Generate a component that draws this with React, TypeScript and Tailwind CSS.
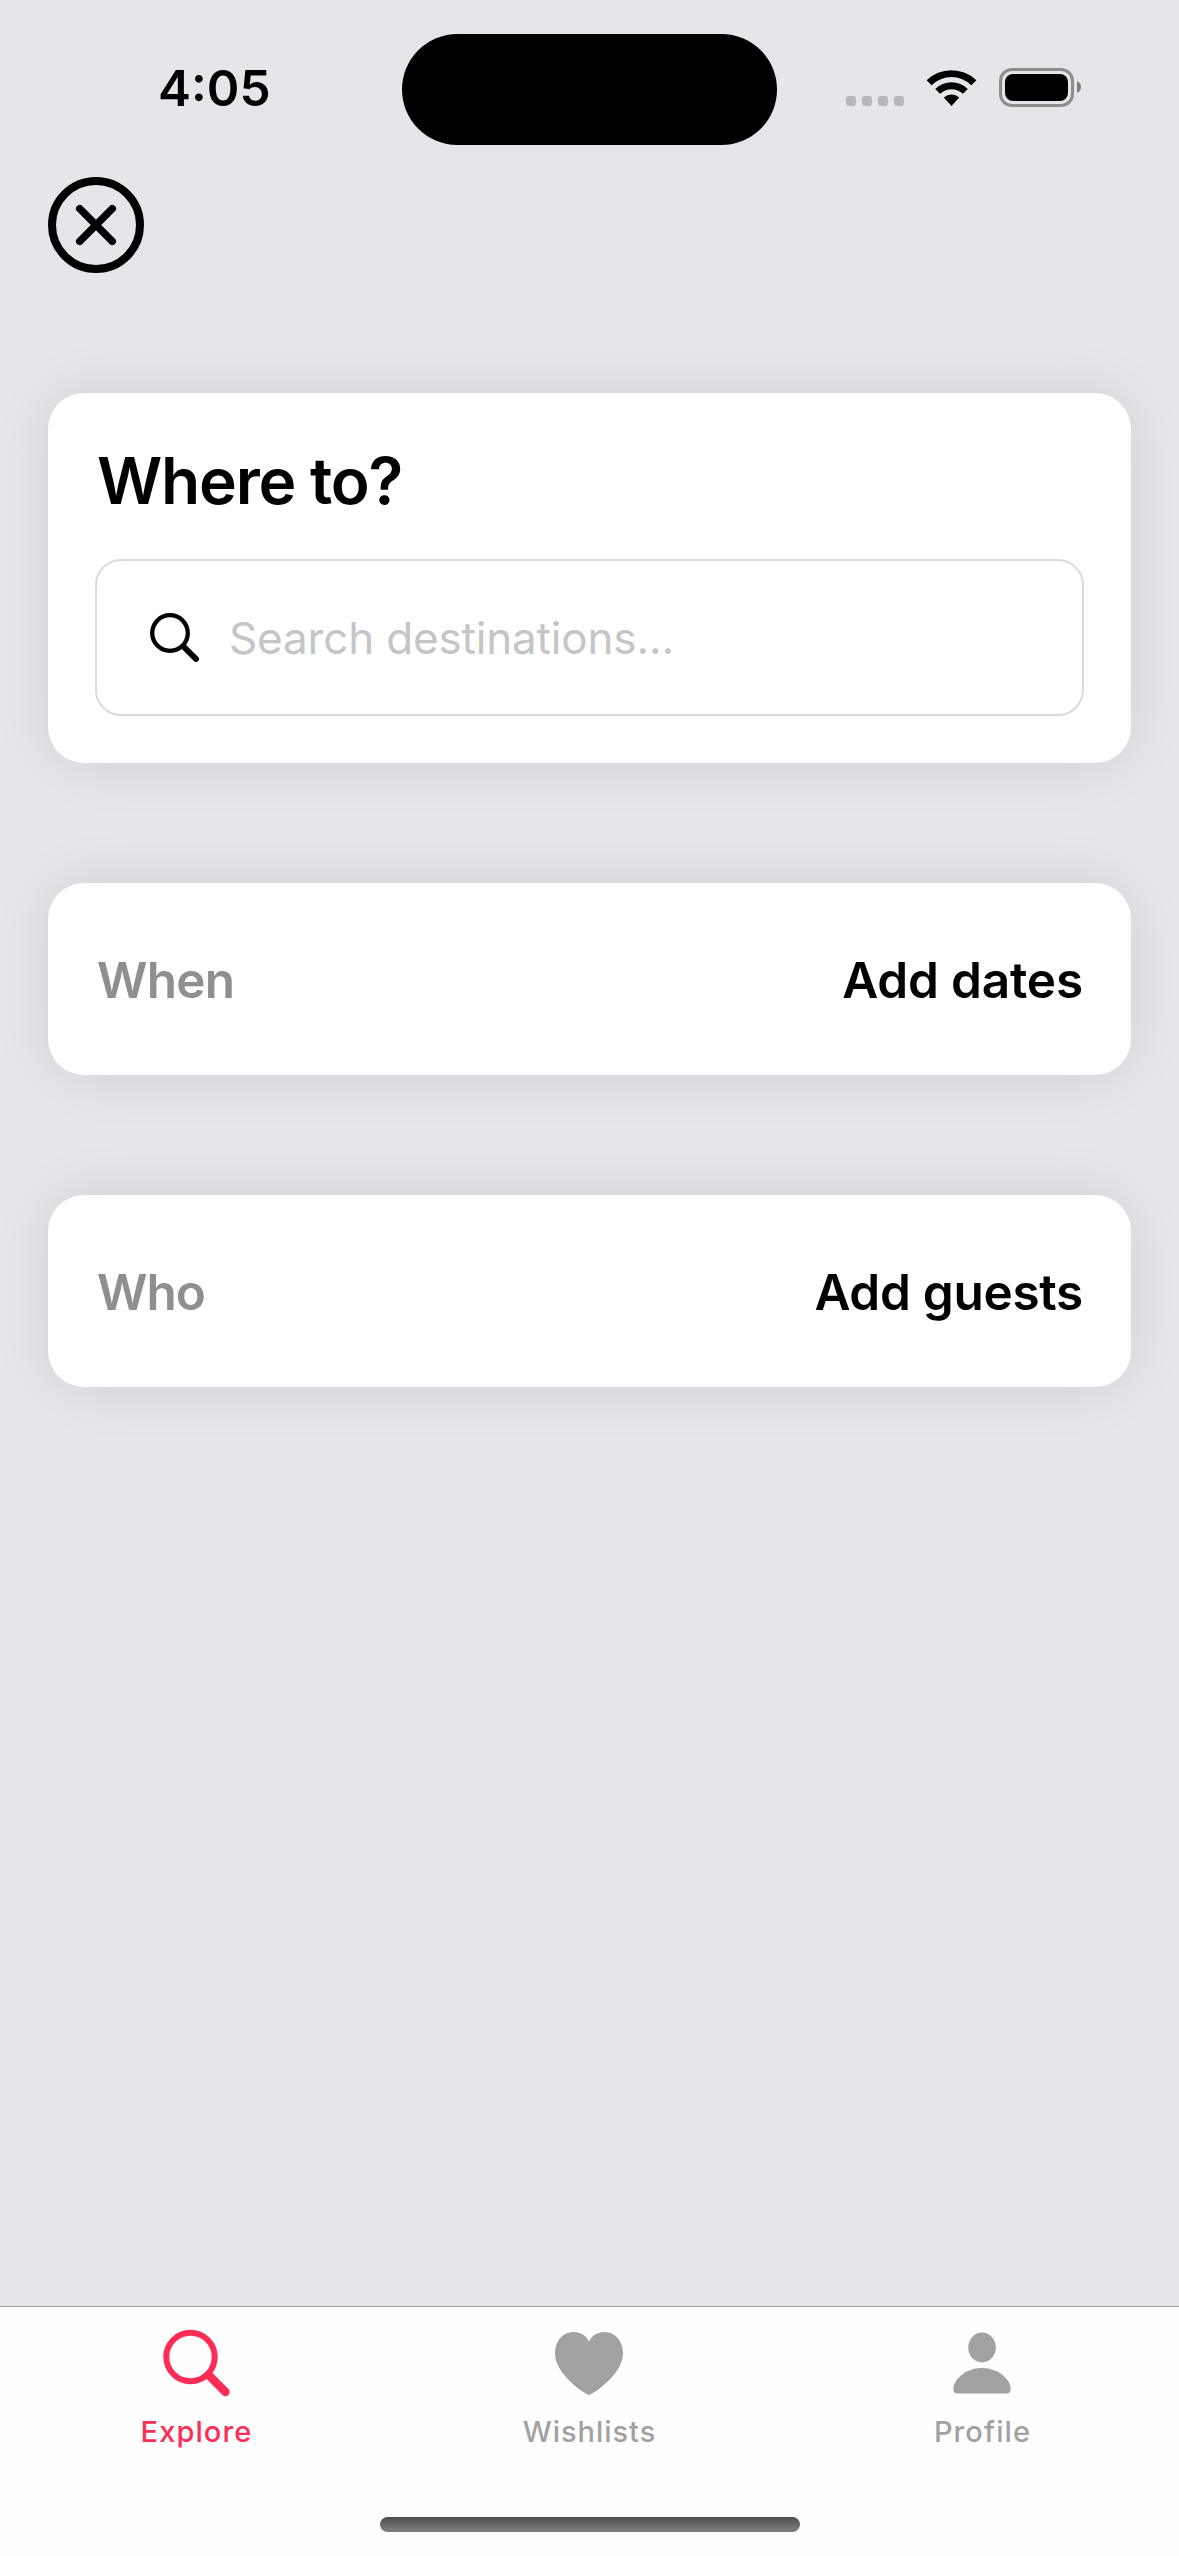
import React from "react";

function StatusBar() {
  return (
    <div className="flex h-[177px] w-full shrink-0">
      <div className="ml-[158px] mt-[58px] flex h-[60px] w-[243.5px] items-center text-[49.5px] font-semibold leading-[60px]">
        <span>4:05</span>
      </div>
      <div className="mt-[33.5px] h-[111px] w-[375.5px] rounded-[56px] bg-black" />
      <div className="ml-[69px] mt-[68px] flex h-[39px]">
        <div className="mt-7 flex gap-1.5">
          <i className="size-2.5 rounded-[3.5px] bg-[#b8b7bc]" />
          <i className="size-2.5 rounded-[3.5px] bg-[#b8b7bc]" />
          <i className="size-2.5 rounded-[3.5px] bg-[#b8b7bc]" />
          <i className="size-2.5 rounded-[3.5px] bg-[#b8b7bc]" />
        </div>
        <svg className="ml-[22px] mt-px h-[37px] w-[51px]" viewBox="0 0 51 37">
          <path d="M.6 11.3a35.6 35.6 0 0 1 49.8 0L45.4 16.2a28.5 28.5 0 0 0-39.800 0Z" />
          <path d="M9.2 19.9a23.4 23.4 0 0 1 32.6 0L37 24.8a16.5 16.5 0 0 0-23 0Z" />
          <path d="M17.8 28.5a11.2 11.2 0 0 1 15.4 0L25.5 37Z" />
        </svg>
        <div className="ml-[22px] flex h-[39px] w-[75px] rounded-[13px] border-[3px] border-[#8d8d90] p-[3px]">
          <div className="w-full rounded-[8px] bg-black" />
        </div>
        <svg className="ml-[3px] mt-[13px] h-3 w-1" viewBox="0 0 4 12">
          <path d="M0 0C2.5 1.300 4 3.500 4 6S2.5 10.700 0 12Z" fill="#7c7c7f" />
        </svg>
      </div>
    </div>
  );
}

interface RowProps {
  label: string;
  value: string;
  labelClass: string;
  valueClass: string;
}

function Row({ label, value, labelClass, valueClass }: RowProps) {
  return (
    <div className="flex h-48 items-center justify-between rounded-[36px] bg-white pl-[49px] pr-12 pt-0.5 text-[49.5px] font-semibold leading-[60px] shadow-[0_0_60px_rgba(0,0,0,0.09)]">
      <span className={"text-[#8e8e93] " + labelClass}>{label}</span>
      <span className={valueClass}>{value}</span>
    </div>
  );
}

interface TabProps {
  label: string;
  className: string;
  children: React.ReactNode;
}

function Tab({ label, className, children }: TabProps) {
  return (
    <div className={"flex w-[393px] flex-col items-center pt-[22px] " + className}>
      <div className="flex h-[70px] items-start justify-center">{children}</div>
      <span className="mt-[15px] text-[29px] font-medium leading-9">{label}</span>
    </div>
  );
}

export default function App() {
  return (
    <div className="flex h-[2556px] w-[1179px] flex-col overflow-hidden bg-[#e5e5ea] font-['Inter',sans-serif] text-black">
      <StatusBar />
      <svg className="ml-12 size-24 shrink-0" viewBox="0 0 96 96" fill="none" stroke="#000" strokeLinecap="round">
        <circle cx="48" cy="48" r="44" strokeWidth="8" />
        <path d="M31.7 31.7 64.3 64.3M64.3 31.7 31.7 64.3" strokeWidth="7.4" />
      </svg>
      <div className="mx-12 mt-[120px] flex flex-col gap-[120px]">
        <div className="h-[370px] rounded-[36px] bg-white px-12 pt-[49px] shadow-[0_0_60px_rgba(0,0,0,0.09)]">
          <h1 className="ml-px h-[78px] text-[64px] font-semibold leading-[78px] tracking-[-1.2px]">Where to?</h1>
          <div className="-mx-px mt-[39px] flex h-[157px] items-center rounded-[26px] border-2 border-[#dbdbdd]">
            <svg className="ml-[53px] size-[50px]" viewBox="0 0 50 50" fill="none" stroke="#000" strokeLinecap="round">
              <circle cx="20" cy="20" r="17.8" strokeWidth="4.300" />
              <path d="M33.5 33.5 46 46" strokeWidth="6" />
            </svg>
            <span className="ml-[29px] text-[44px] leading-[54px] tracking-[-0.17px] text-[#c5c5c7]">Search destinations...</span>
          </div>
        </div>
        <Row label="When" value="Add dates" labelClass="tracking-[-0.75px]" valueClass="tracking-[-0.16px]" />
        <Row label="Who" value="Add guests" labelClass="tracking-[-1px]" valueClass="tracking-[-0.29px]" />
      </div>
      <div className="mt-auto flex h-[250px] shrink-0 flex-col border-t border-[#9d9da1] bg-[#fefefe]">
        <div className="flex">
          <Tab label="Explore" className="text-[#ff2d55] tracking-[1.1px]">
            <svg className="h-[70px] w-[68px]" viewBox="0 0 68 70" fill="none" stroke="currentColor" strokeLinecap="round">
              <circle cx="27.5" cy="28" r="24.2" strokeWidth="6" />
              <path d="M45.5 46 62.5 63" strokeWidth="8.4" />
            </svg>
          </Tab>
          <Tab label="Wishlists" className="text-[#a1a1a1] tracking-[0.95px]">
            <svg className="mr-px mt-[3px] h-[63px] w-[68px]" viewBox="0 0 68 63" fill="currentColor">
              <path d="M34 63C31.5 63 0 43 0 21.5C0 8.5 8 0 18.5 0C25.5 0 31 3.5 34 9.5C37 3.5 42.5 0 49.500 0C60 0 68 8.5 68 21.5C68 43 36.5 63 34 63Z" />
            </svg>
          </Tab>
          <Tab label="Profile" className="text-[#a1a1a1] tracking-[1.1px]">
            <svg className="mr-0.5 mt-[3px] h-[63px] w-[58px]" viewBox="0 0 58 63" fill="currentColor">
              <ellipse cx="29" cy="15.5" rx="13.8" ry="15" />
              <path d="M5 61.5C2 61.5.3 60 .3 57C.3 49 11 36 29 36S57.700 49 57.7 57C57.7 60 56 61.5 53 61.5Z" />
            </svg>
          </Tab>
        </div>
        <div className="mx-auto mb-6 mt-auto h-[15px] w-[420px] rounded-full bg-linear-to-b from-[#4f4f4f] to-[#808080]" />
      </div>
    </div>
  );
}
